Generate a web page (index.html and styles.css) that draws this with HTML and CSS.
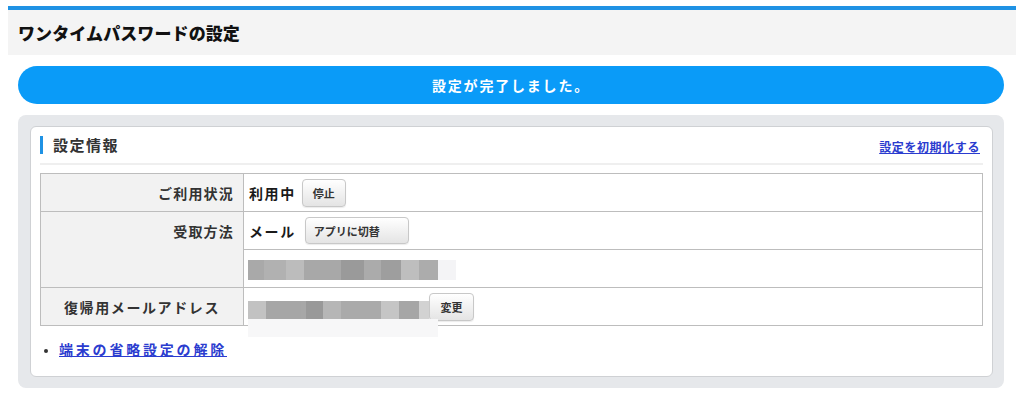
FILE: index.html
```html
<!DOCTYPE html>
<html lang="ja">
<head>
<meta charset="utf-8">
<title>ワンタイムパスワードの設定</title>
<link rel="stylesheet" href="styles.css">
</head>
<body>
<div class="page">
  <header class="topbar">
    <h1 class="title">ワンタイムパスワードの設定</h1>
  </header>
  <main class="main">
    <div class="notice">設定が完了しました。</div>
    <section class="panel">
      <div class="inner">
        <div class="sec-head">
          <h2 class="sec-title">設定情報</h2>
          <a class="reset-link" href="#">設定を初期化する</a>
        </div>
        <table class="info">
          <tr>
            <th class="lbl">ご利用状況</th>
            <td class="val"><span class="strong">利用中</span><button class="btn btn-stop">停止</button></td>
          </tr>
          <tr>
            <th class="lbl lbl-top" rowspan="2">受取方法</th>
            <td class="val"><span class="strong">メール</span><button class="btn btn-app">アプリに切替</button></td>
          </tr>
          <tr>
            <td class="val"><span class="mosaic mosaic-a"></span></td>
          </tr>
          <tr>
            <th class="lbl lbl-center">復帰用メールアドレス</th>
            <td class="val val-addr"><span class="mosaic-wrap"><span class="mosaic mosaic-b"></span><span class="mosaic-shadow"></span></span><button class="btn btn-change">変更</button></td>
          </tr>
        </table>
        <ul class="links">
          <li><a href="#">端末の省略設定の解除</a></li>
        </ul>
      </div>
    </section>
  </main>
</div>
</body>
</html>
```
FILE: styles.css
```css
html, body {
  margin: 0;
  padding: 0;
  background: #ffffff;
}
body {
  font-family: "Noto Sans CJK JP", "Noto Sans", "Liberation Sans", sans-serif;
  color: #222;
}
.page {
  padding: 6px 8px 0 8px;
}
.topbar {
  border-top: 4px solid #1f92e4;
  background: #f4f4f4;
  height: 45px;
  display: flex;
  align-items: center;
  padding-left: 10px;
}
.title {
  margin: 0;
  font-size: 17px;
  font-weight: 900;
  letter-spacing: 0.1px;
  color: #111;
}
.main {
  padding: 11px 12px 0 10px;
}
.notice {
  height: 38px;
  border-radius: 19px;
  background: #0a9bf8;
  color: #fff;
  font-weight: 700;
  font-size: 14px;
  letter-spacing: 1.8px;
  display: flex;
  align-items: center;
  justify-content: center;
  margin-bottom: 11px;
}
.panel {
  background: #e6e8eb;
  border-radius: 8px;
  padding: 11px 11px 11px 12px;
  height: 273px;
  box-sizing: border-box;
}
.inner {
  background: #fff;
  border: 1px solid #cfd1d4;
  border-radius: 6px;
  height: 100%;
  box-sizing: border-box;
  padding: 0 9px;
}
.sec-head {
  height: 36px;
  border-bottom: 2px solid #efefef;
  display: flex;
  align-items: center;
  justify-content: space-between;
}
.sec-title {
  margin: 0;
  font-size: 15px;
  font-weight: 700;
  letter-spacing: 1.5px;
  color: #333;
  border-left: 3px solid #1f92e4;
  padding-left: 10px;
  line-height: 18px;
}
.reset-link {
  font-size: 12px;
  font-weight: 700;
  letter-spacing: 0.6px;
  color: #2b3ccf;
  margin-right: 3px;
  margin-top: 3px;
}
.info {
  width: 100%;
  margin-top: 8px;
  border-collapse: collapse;
  border: 1px solid #b9b9b9;
}
.info th, .info td {
  border: 1px solid #bdbdbd;
  height: 38px;
  padding: 0;
  box-sizing: border-box;
}
.lbl {
  width: 203px;
  background: #f2f2f2;
  text-align: right;
  padding-right: 9px !important;
  font-size: 14px;
  font-weight: 700;
  letter-spacing: 1.2px;
  color: #333;
}
.lbl-top {
  vertical-align: top;
  padding-top: 9px !important;
}
.lbl-center {
  text-align: center;
  padding-right: 0 !important;
  letter-spacing: 1.6px;
}
.val {
  padding-left: 5px !important;
  font-size: 14px;
}
.strong {
  font-weight: 700;
  letter-spacing: 1.6px;
  color: #1a1a1a;
  vertical-align: middle;
}
.btn {
  font-family: inherit;
  font-size: 11px;
  font-weight: 700;
  color: #333;
  background: linear-gradient(#ffffff, #e4e4e4);
  border: 1px solid #c8c8c8;
  border-radius: 4px;
  height: 28px;
  padding: 0 8px;
  margin-left: 6px;
  vertical-align: middle;
  box-shadow: 0 1px 1px rgba(0,0,0,0.08);
}
.btn-stop { width: 44px; padding: 0; }
.btn-app { width: 104px; padding: 0 0 0 8px; text-align: left; height: 27px; margin-left: 9px; }
.btn-change { width: 45px; padding: 0; margin-left: 0; }
.mosaic {
  display: inline-block;
  height: 20px;
  vertical-align: middle;
}
.mosaic-a {
  width: 208px;
  margin-left: -1px;
  background: linear-gradient(to right,
    #a9a9a9 0 16px, #b1b1b1 16px 38px, #bcbcbc 38px 56px, #a8a8a8 56px 93px,
    #9a9a9a 93px 116px, #ababab 116px 133px, #9e9e9e 133px 153px, #bebebe 153px 171px,
    #acacac 171px 190px, #f4f4f6 190px 208px);
}
.val-addr {
  white-space: nowrap;
}
.mosaic-wrap {
  display: inline-block;
  position: relative;
  vertical-align: middle;
  width: 181px;
  height: 20px;
  margin-top: 4px;
  margin-left: -1px;
}
.mosaic-b {
  width: 181px;
  background: linear-gradient(to right,
    #c2c2c2 0 18px, #a6a6a6 18px 53px, #a7a7a7 53px 58px, #999999 58px 75px,
    #b6b6b6 75px 93px, #aaaaaa 93px 133px, #c5c5c5 133px 151px, #a6a6a6 151px 171px,
    #d2d2d2 171px 181px);
}
.mosaic-shadow {
  position: absolute;
  left: 0;
  top: 20px;
  width: 190px;
  height: 18px;
  background: #f7f7f8;
}
.links {
  margin: 13px 0 0 0;
  padding: 0 0 0 19px;
  font-size: 14px;
  color: #333;
}
.links li::marker {
  font-size: 11px;
}
.links a {
  font-weight: 700;
  letter-spacing: 2.8px;
  color: #2b3ccf;
  font-size: 14px;
}
```
